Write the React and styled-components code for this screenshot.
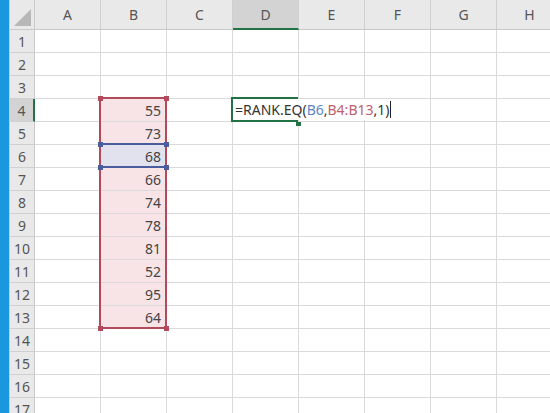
import React from "react";
import styled, { createGlobalStyle } from "styled-components";

const COLS = ["A", "B", "C", "D", "E", "F", "G", "H"];
const ROWS = 17;
const COL_W = 66;
const ROW_H = 23;
const HEAD_W = 25;
const HEAD_H = 30;
const VALUES = { 4: 55, 5: 73, 6: 68, 7: 66, 8: 74, 9: 78, 10: 81, 11: 52, 12: 95, 13: 64 };

const GlobalStyle = createGlobalStyle`
  html, body {
    margin: 0;
    padding: 0;
    background: #ffffff;
    overflow: hidden;
  }
  body {
    font-family: "Noto Sans", "Noto Sans CJK JP", sans-serif;
  }
`;

const Frame = styled.div`
  display: flex;
  width: 550px;
  height: 413px;
  overflow: hidden;
`;

const EdgeStrip = styled.div`
  flex: 0 0 9px;
  background: #1b97df;
  border-right: 1px solid #a9d6f1;
`;

const Sheet = styled.div`
  position: relative;
  display: grid;
  grid-template-columns: ${HEAD_W}px repeat(${COLS.length}, ${COL_W}px);
  grid-template-rows: ${HEAD_H}px;
  grid-auto-rows: ${ROW_H}px;
  align-content: start;
`;

const Corner = styled.div`
  box-sizing: border-box;
  background: #e9e9e9;
  border-right: 1px solid #c9c9c9;
  border-bottom: 1px solid #c9c9c9;
  display: flex;
  align-items: flex-end;
  justify-content: flex-end;
  padding: 0 3px 3px 0;
`;

const ColHeader = styled.div`
  box-sizing: border-box;
  background: ${(p) => (p.$active ? "#d3d3d3" : "#e9e9e9")};
  border-right: 1px solid #d0d0d0;
  border-bottom: ${(p) => (p.$active ? "2px solid #217346" : "1px solid #c9c9c9")};
  display: flex;
  align-items: center;
  justify-content: center;
  padding-top: ${(p) => (p.$active ? "1px" : "0")};
  font-size: 14px;
  color: #555555;
`;

const RowHeader = styled.div`
  box-sizing: border-box;
  background: ${(p) => (p.$active ? "#d3d3d3" : "#e9e9e9")};
  border-right: ${(p) => (p.$active ? "2px solid #217346" : "1px solid #c9c9c9")};
  border-bottom: 1px solid #d0d0d0;
  display: flex;
  align-items: center;
  justify-content: center;
  font-size: 14px;
  color: #555555;
`;

const Cell = styled.div`
  box-sizing: border-box;
  background: ${(p) => p.$fill || "#ffffff"};
  border-right: 1px solid #dadada;
  border-bottom: 1px solid #dadada;
  display: flex;
  align-items: center;
  justify-content: flex-end;
  padding-right: 5px;
  font-size: 14px;
  color: #444444;
`;

const RangeBox = styled.div`
  position: absolute;
  box-sizing: border-box;
  border: 2px solid #b24a5c;
  pointer-events: none;
`;

const Band = styled.div`
  position: absolute;
  height: 2px;
  background: #4a5e9e;
`;

const Handle = styled.div`
  position: absolute;
  width: 5px;
  height: 5px;
  background: ${(p) => p.$color};
`;

const ActiveBox = styled.div`
  position: absolute;
  box-sizing: border-box;
  border: 2px solid #217346;
  border-right: none;
`;

const FillHandle = styled.div`
  position: absolute;
  width: 5px;
  height: 4px;
  background: #217346;
  border-left: 1px solid #ffffff;
`;

const Editor = styled.div`
  position: absolute;
  display: flex;
  align-items: center;
  height: 21px;
  padding-left: 2px;
  background: #ffffff;
  font-family: "Noto Sans", "Noto Sans CJK JP", sans-serif;
  font-size: 14px;
  color: #333333;
  white-space: nowrap;
`;

const Ref = styled.span`
  color: ${(p) => p.$color};
`;

const Caret = styled.span`
  display: inline-block;
  width: 1px;
  height: 17px;
  margin-left: 1px;
  background: #222222;
`;

const CornerMark = () => (
  <svg width="17" height="17" viewBox="0 0 17 17">
    <polygon points="17,0 17,17 0,17" fill="#b7b7b7" />
  </svg>
);

// left/top gridline of column i (0 = A) and row r (1-based), in sheet coords
const colLine = (i) => HEAD_W + COL_W * i - 1;
const rowLine = (r) => HEAD_H + ROW_H * (r - 1) - 1;

const cellFill = (row, col) => {
  if (col !== 1 || !VALUES[row]) return null;
  return row === 6 ? "#e2e2ee" : "#f8e4e6";
};

const App = () => {
  const bL = colLine(1);
  const bR = colLine(2);
  const top = rowLine(4);
  const bottom = rowLine(14);
  const r6Top = rowLine(6);
  const r6Bottom = rowLine(7);
  const dL = colLine(3);
  const dR = colLine(4);

  return (
    <>
      <GlobalStyle />
      <Frame>
        <EdgeStrip />
        <Sheet>
          <Corner>
            <CornerMark />
          </Corner>
          {COLS.map((c) => (
            <ColHeader key={c} $active={c === "D"}>
              {c}
            </ColHeader>
          ))}
          {Array.from({ length: ROWS }, (_, i) => i + 1).map((row) => (
            <React.Fragment key={row}>
              <RowHeader $active={row === 4}>{row}</RowHeader>
              {COLS.map((c, ci) => (
                <Cell key={c} $fill={cellFill(row, ci)}>
                  {ci === 1 ? VALUES[row] : null}
                </Cell>
              ))}
            </React.Fragment>
          ))}

          <RangeBox
            style={{ left: bL - 1, top: top - 1, width: bR - bL + 2, height: bottom - top + 2 }}
          />
          <Band style={{ left: bL, top: r6Top - 1, width: bR - bL }} />
          <Band style={{ left: bL, top: r6Bottom - 1, width: bR - bL }} />
          {[top, bottom].map((y) =>
            [bL, bR].map((x) => (
              <Handle key={`r${x}-${y}`} $color="#b24a5c" style={{ left: x - 2, top: y - 2 }} />
            ))
          )}
          {[r6Top, r6Bottom].map((y) =>
            [bL, bR].map((x) => (
              <Handle key={`b${x}-${y}`} $color="#4a5e9e" style={{ left: x - 2, top: y - 2 }} />
            ))
          )}

          <Editor style={{ left: dL + 1, top: rowLine(4) + 1 }}>
            =RANK.EQ(<Ref $color="#5b86c4">B6</Ref>,<Ref $color="#c0606e">B4:B13</Ref>,1)
            <Caret />
          </Editor>
          <ActiveBox
            style={{ left: dL - 1, top: rowLine(4) - 1, width: dR - dL + 1, height: ROW_H + 2 }}
          />
          <FillHandle style={{ left: dR - 3, top: rowLine(5) + 1 }} />
        </Sheet>
      </Frame>
    </>
  );
};

export default App;
